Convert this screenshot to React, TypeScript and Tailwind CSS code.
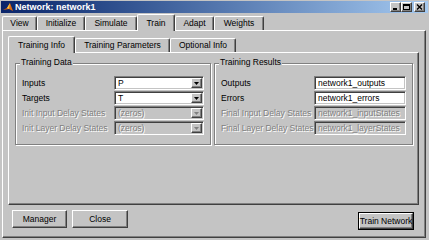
import React from 'react';

const topTabs = [
  { label: 'View', w: 'w-[35px]' },
  { label: 'Initialize', w: 'w-[48px]' },
  { label: 'Simulate', w: 'w-[52px]' },
  { label: 'Train', w: 'w-[38px]', active: true },
  { label: 'Adapt', w: 'w-[39px]' },
  { label: 'Weights', w: 'w-[50px]' },
];

const innerTabs = [
  { label: 'Training Info', w: 'w-[67px]', active: true },
  { label: 'Training Parameters', w: 'w-[95px]' },
  { label: 'Optional Info', w: 'w-[66px]' },
];

const dataRows = [
  { label: 'Inputs', value: 'P' },
  { label: 'Targets', value: 'T' },
  { label: 'Init Input Delay States', value: '(zeros)', disabled: true },
  { label: 'Init Layer Delay States', value: '(zeros)', disabled: true },
];

const resultRows = [
  { label: 'Outputs', value: 'network1_outputs' },
  { label: 'Errors', value: 'network1_errors' },
  { label: 'Final Input Delay States', value: 'network1_inputStates', disabled: true },
  { label: 'Final Layer Delay States', value: 'network1_layerStates', disabled: true },
];

const raised = 'border border-t-white border-l-white border-r-[#404040] border-b-[#404040] shadow-[inset_-1px_-1px_#808080]';
const sunken = 'border border-t-[#808080] border-l-[#808080] border-r-white border-b-white shadow-[inset_1px_1px_#404040,inset_-1px_-1px_#c4c4c4]';
const embossed = 'text-[#808080] [text-shadow:1px_1px_0_#fff]';

function Tab({ label, w, active }: { label: string; w: string; active?: boolean }) {
  return (
    <div
      className={`${w} flex items-center justify-center border-l border-t border-r border-l-white border-t-white border-r-[#404040] shadow-[inset_-1px_0_#808080] rounded-t-[2px] ${
        active ? 'h-[17px] -mb-px relative z-10 bg-[#c4c4c4]' : 'h-[14px]'
      }`}
    >
      <span className="leading-none whitespace-nowrap">{label}</span>
    </div>
  );
}

function Arrow({ disabled }: { disabled?: boolean }) {
  return (
    <div className={`w-[11px] h-full flex items-center justify-center bg-[#c4c4c4] ${raised}`}>
      <svg width="5" height="3" viewBox="0 0 5 3">
        <polygon points="0,0 5,0 2.5,3" fill={disabled ? '#808080' : '#000'} />
      </svg>
    </div>
  );
}

function Combo({ value, disabled }: { value: string; disabled?: boolean }) {
  return (
    <div className={`w-[90px] h-[14px] flex items-stretch p-[1px] ${sunken} ${disabled ? 'bg-[#c4c4c4]' : 'bg-white'}`}>
      <div className={`flex-1 flex items-center pl-[2px] leading-none ${disabled ? embossed : 'text-black'}`}>{value}</div>
      <Arrow disabled={disabled} />
    </div>
  );
}

function Field({ value, disabled }: { value: string; disabled?: boolean }) {
  return (
    <div className={`w-[92px] h-[14px] flex items-center pl-[3px] leading-none whitespace-nowrap overflow-hidden ${sunken} ${disabled ? `bg-[#c4c4c4] ${embossed}` : 'bg-white text-black'}`}>
      {value}
    </div>
  );
}

function Group({ title, className, children }: { title: string; className: string; children: React.ReactNode }) {
  return (
    <div className={`relative border border-[#808080] shadow-[inset_1px_1px_#fff,1px_1px_#fff] pt-[12px] pb-[9px] flex flex-col gap-[1px] ${className}`}>
      <span className="absolute -top-[6px] left-[4px] px-[1px] bg-[#c4c4c4] leading-none">{title}</span>
      {children}
    </div>
  );
}

function Row({ label, disabled, children }: { label: string; disabled?: boolean; children: React.ReactNode }) {
  return (
    <div className="h-[14px] flex items-center justify-between pl-[6px] pr-[6px]">
      <span className={`leading-none whitespace-nowrap ${disabled ? embossed : 'text-black'}`}>{label}</span>
      {children}
    </div>
  );
}

function Button({ label, w, isDefault }: { label: string; w: string; isDefault?: boolean }) {
  return (
    <div className={`${w} h-[18px] ${isDefault ? 'border border-black' : ''}`}>
      <div className={`w-full h-full flex items-center justify-center ${raised}`}>
        <span className="leading-none whitespace-nowrap">{label}</span>
      </div>
    </div>
  );
}

function TitleButton({ kind }: { kind: 'min' | 'max' | 'close' }) {
  return (
    <div className={`w-[11px] h-[10px] flex items-center justify-center bg-[#c4c4c4] ${raised}`}>
      <svg width="7" height="6" viewBox="0 0 7 6">
        {kind === 'min' && <rect x="1" y="4" width="4" height="2" fill="#000" />}
        {kind === 'max' && (
          <>
            <rect x="0.5" y="0.5" width="6" height="5" fill="none" stroke="#000" />
            <rect x="0" y="0" width="7" height="2" fill="#000" />
          </>
        )}
        {kind === 'close' && <path d="M1 0.5 L6 5.5 M6 0.5 L1 5.5" stroke="#000" strokeWidth="1.4" />}
      </svg>
    </div>
  );
}

export default function App() {
  return (
    <div className="w-[429px] h-[240px] bg-[#c4c4c4] flex flex-col pt-[1px] px-[1px] font-['Liberation_Sans',Arial,sans-serif] text-[8.5px] text-black overflow-hidden">
      <div className="h-[12px] flex items-center bg-linear-to-r from-[#0a246a] to-[#a6caf0] pl-[2px] pr-[3px]">
        <svg width="10" height="10" viewBox="0 0 10 10" className="mr-[2px]">
          <polygon points="0,8 4,6 7,1 10,9 6,7" fill="#e06a10" />
          <polygon points="4,6 7,1 6,7" fill="#f8c840" />
        </svg>
        <span className="text-white font-bold text-[9px] leading-none">Network: network1</span>
        <div className="ml-auto flex items-center">
          <TitleButton kind="min" />
          <TitleButton kind="max" />
          <div className="w-[2px]" />
          <TitleButton kind="close" />
        </div>
      </div>

      <div className="h-[17px] flex items-end pl-[1px]">
        {topTabs.map((t) => (
          <Tab key={t.label} {...t} />
        ))}
      </div>

      <div className={`ml-[1px] mr-[2px] mb-[2px] flex-1 flex flex-col ${raised}`}>
        <div className="h-[16px] mt-[5px] flex items-end pl-[5px]">
          {innerTabs.map((t) => (
            <Tab key={t.label} {...t} />
          ))}
        </div>

        <div className={`ml-[5px] mr-[6px] h-[153px] ${raised}`}>
          <div className="flex gap-[3px] pl-[6px] pr-[5px] mt-[10px]">
            <Group title="Training Data" className="w-[196px]">
              {dataRows.map((r) => (
                <Row key={r.label} label={r.label} disabled={r.disabled}>
                  <Combo value={r.value} disabled={r.disabled} />
                </Row>
              ))}
            </Group>
            <Group title="Training Results" className="flex-1">
              {resultRows.map((r) => (
                <Row key={r.label} label={r.label} disabled={r.disabled}>
                  <Field value={r.value} disabled={r.disabled} />
                </Row>
              ))}
            </Group>
          </div>
        </div>

        <div className="flex items-start mt-[5px] pl-[9px] pr-[11px] gap-[5px]">
          <Button label="Manager" w="w-[55px]" />
          <Button label="Close" w="w-[56px]" />
          <div className="ml-auto mt-[2px]">
            <Button label="Train Network" w="w-[56px]" isDefault />
          </div>
        </div>
      </div>
    </div>
  );
}
